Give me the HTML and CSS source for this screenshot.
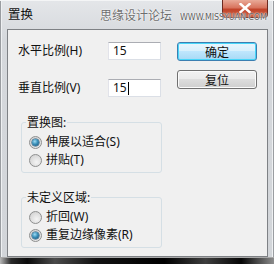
FILE: index.html
```html
<!DOCTYPE html>
<html>
<head>
<meta charset="utf-8">
<link rel="stylesheet" href="styles.css">
</head>
<body>
<div class="window">
  <div class="titlebar">
    <span class="title">置换</span>
    <span class="close">
      <svg width="12" height="10" viewBox="0 0 12 10"><path d="M1.5 1 L10.5 9 M10.5 1 L1.5 9" stroke="#fff" stroke-width="2.4" stroke-linecap="square"/></svg>
    </span>
    <div class="watermark"><span class="wm-cn">思缘设计论坛</span><span class="wm-en">WWW.MISSYUAN.COM</span></div>
  </div>
  <div class="body">
    <div class="panel">
      <div class="left">
        <div class="field"><span class="label">水平比例(H)</span><div class="input">15</div></div>
        <div class="field second"><span class="label">垂直比例(V)</span><div class="input">15<span class="caret"></span></div></div>
        <fieldset class="group">
          <legend>置换图:</legend>
          <div class="radio-row"><span class="radio checked"></span>伸展以适合(S)</div>
          <div class="radio-row"><span class="radio"></span>拼贴(T)</div>
        </fieldset>
        <fieldset class="group group2">
          <legend>未定义区域:</legend>
          <div class="radio-row"><span class="radio"></span>折回(W)</div>
          <div class="radio-row"><span class="radio checked"></span>重复边缘像素(R)</div>
        </fieldset>
      </div>
      <div class="buttons">
        <div class="btn default">确定</div>
        <div class="btn">复位</div>
      </div>
    </div>
  </div>
  <div class="bottom"></div>
</div>
</body>
</html>
```

FILE: styles.css
```css
* { box-sizing: border-box; }
html, body { margin: 0; padding: 0; }
body {
  width: 274px;
  height: 264px;
  overflow: hidden;
  font-family: "Noto Sans", "Noto Sans CJK SC", sans-serif;
  font-size: 12px;
  color: #111;
}
.window {
  width: 274px;
  height: 264px;
  display: flex;
  flex-direction: column;
  background: linear-gradient(#e4e6e9, #d5d8dc 40px, #d2d5d9);
  box-shadow: inset 1px 0 0 #9a9da1, inset 2px 0 0 #eef0f2, inset -1px 0 0 #9a9da1, inset -2px 0 0 #eef0f2;
  position: relative;
}
.titlebar {
  height: 29px;
  flex: none;
  display: flex;
  align-items: flex-start;
  padding-left: 8px;
  box-shadow: inset 0 1px 0 #f4f5f6;
}
.title {
  margin-top: 6px;
  font-family: "Noto Sans CJK SC", sans-serif;
  font-size: 12.5px;
  line-height: 16px;
  color: #111;
}
.close {
  margin-left: auto;
  margin-right: 6px;
  width: 46px;
  height: 18px;
  border: 1px solid #6d2a20;
  border-top: none;
  border-radius: 0 0 4px 4px;
  background: linear-gradient(#e9aa98, #d8745e 45%, #c2442b 55%, #c95a3c);
  display: flex;
  align-items: center;
  justify-content: center;
  padding-bottom: 2px;
}
.watermark {
  position: absolute;
  left: 100px;
  top: 6px;
  display: flex;
  align-items: flex-start;
  white-space: nowrap;
  pointer-events: none;
}
.wm-cn {
  font-family: "Noto Sans CJK SC", sans-serif;
  font-size: 12px;
  line-height: 17px;
  color: #6e6e6e;
  text-shadow: 0 0 2px #fff, 0 0 1px #fff;
}
.wm-en {
  margin-left: 8px;
  margin-top: 7px;
  line-height: 9px;
  font-family: "DejaVu Sans", sans-serif;
  font-size: 8px;
  letter-spacing: -0.1px;
  color: #5f5f5f;
  text-shadow: 0 0 2px #fff, 0 0 1px #fff;
}
.body {
  flex: 1;
  padding: 0 6px 0 7px;
  display: flex;
}
.panel {
  flex: 1;
  border: 1px solid #7e8185;
  background: #f0f0f0;
  padding: 12px 0 0 10px;
  display: flex;
  align-items: flex-start;
}
.left {
  width: 144px;
  display: flex;
  flex-direction: column;
}
.field {
  display: flex;
  align-items: center;
  height: 18px;
}
.field.second { margin-top: 19px; }
.label {
  width: 90px;
  line-height: 16px;
}
.input {
  width: 53px;
  height: 18px;
  background: #fff;
  border: 1px solid #dbdfe6;
  border-top-color: #abadb3;
  border-left-color: #e2e3ea;
  padding-left: 4px;
  line-height: 16px;
  display: flex;
  align-items: center;
}
.caret {
  display: inline-block;
  width: 1px;
  height: 13px;
  background: #000;
  margin-left: 1px;
}
.group {
  margin: 18px 0 0 3px;
  width: 141px;
  border: 1px solid #d5dfe5;
  border-radius: 3px;
  padding: 3px 0 3px 4px;
  min-width: 0;
}
.group2 { margin-top: 17px; }
.group legend {
  padding: 0 1px;
  line-height: 15px;
}
.radio-row {
  display: flex;
  align-items: center;
  height: 18px;
  margin-left: 3px;
  line-height: 16px;
}
.radio {
  width: 13px;
  height: 13px;
  border-radius: 50%;
  border: 1px solid #8e8f8f;
  background: radial-gradient(circle at 60% 65%, #f4f4f4 0, #dcdcdc 60%, #c9c9c9 100%);
  margin-right: 4px;
  display: flex;
  align-items: center;
  justify-content: center;
  flex: none;
}
.radio.checked::after {
  content: "";
  width: 7px;
  height: 7px;
  border-radius: 50%;
  background: radial-gradient(circle at 40% 35%, #9fdcf4 0, #3a8fb8 45%, #11466e 100%);
  box-shadow: 0 0 0 0.5px #1d4c6e;
}
.buttons {
  margin-left: 15px;
  display: flex;
  flex-direction: column;
  gap: 9px;
}
.btn {
  width: 80px;
  height: 19px;
  border: 1px solid #707070;
  border-radius: 3px;
  background: linear-gradient(#f2f2f2, #ebebeb 45%, #dddddd 50%, #cfcfcf);
  box-shadow: inset 0 0 0 1px #fbfbfb;
  text-align: center;
  line-height: 17px;
  font-family: "Noto Sans CJK SC", sans-serif;
}
.btn.default {
  border-color: #3c7fb1;
  background: linear-gradient(#eaf6fd, #d9f0fc 45%, #bee6fd 50%, #a7d9f5);
  box-shadow: inset 0 0 0 1px #48d6f9;
}
.bottom {
  height: 7px;
  flex: none;
  background:
    linear-gradient(90deg, #b8b8b8 0, #2a2a2a 4%, #0a0a0a 10%, #4a4a4a 20%, #111 35%, #000 60%, #3d3d3d 75%, #050505 88%, #8c8c8c 100%);
  box-shadow: inset 0 1px 0 #a8a8a8;
}
```
